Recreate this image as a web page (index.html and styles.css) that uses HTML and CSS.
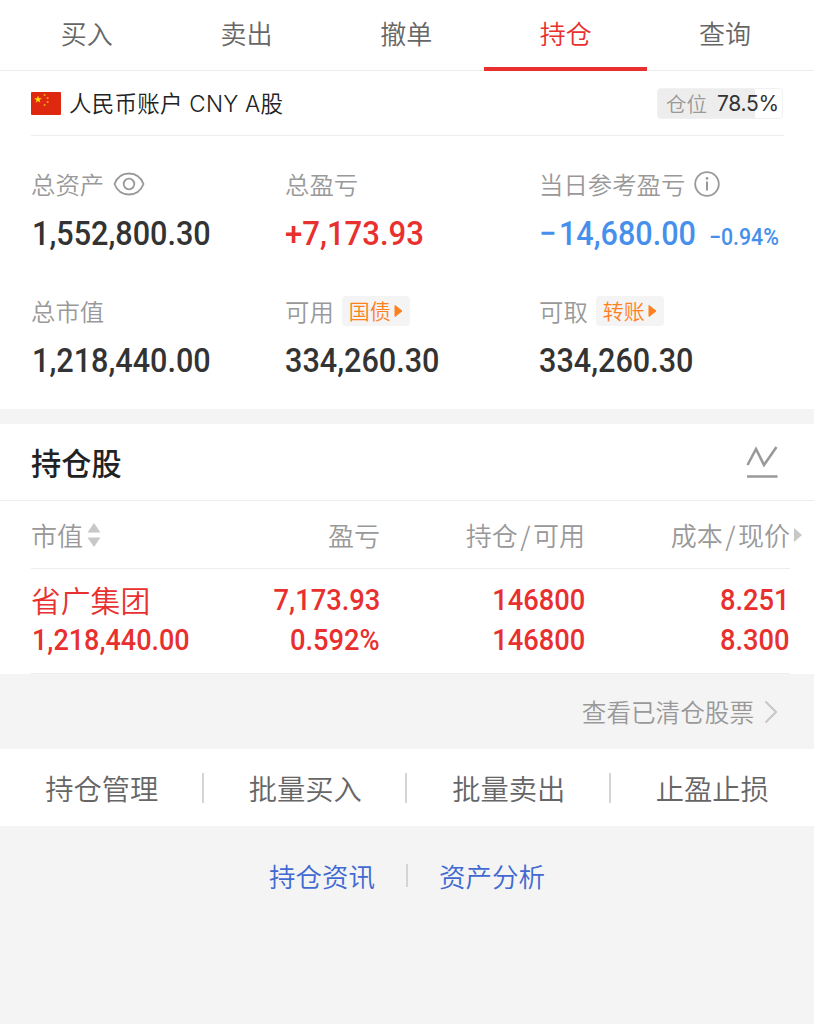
FILE: index.html
```html
<!DOCTYPE html>
<html lang="zh-CN">
<head>
<meta charset="utf-8">
<title>持仓</title>
<link rel="stylesheet" href="styles.css">
</head>
<body>
<nav class="tabs">
  <span class="tab">买入</span><span class="tab">卖出</span><span class="tab">撤单</span><span class="tab tab-active">持仓</span><span class="tab">查询</span>
</nav>
<section class="account">
  <svg class="flag" viewBox="0 0 30 23"><rect width="30" height="23" rx="1" fill="#de2910"/><path fill="#ffde00" d="M7 3.4l.95 2.8h2.95L8.5 7.95l.9 2.85L7 9.05 4.6 10.8l.9-2.85L3.1 6.2h2.95z"/><g fill="#f5b400"><circle cx="13.6" cy="3.1" r="1"/><circle cx="16.6" cy="5.9" r="1"/><circle cx="16.6" cy="10" r="1"/><circle cx="13.6" cy="13" r="1"/></g></svg>
  <span class="account-name">人民币账户 CNY A股</span>
  <span class="position"><span class="position-label">仓位</span><span class="position-value">78.5%</span></span>
</section>
<section class="metrics">
  <div class="metric">
    <div class="label">总资产<svg class="eye" viewBox="0 0 32 24"><g fill="none" stroke="#999" stroke-width="1.8"><path d="M1.500 12C4 5.500 9.500 1.500 16 1.500S28 5.500 30.500 12C28 18.500 22.500 22.500 16 22.500S4 18.500 1.500 12z"/><circle cx="16" cy="12" r="5.300"/></g></svg></div>
    <div class="value value-one"><span class="num">1,552,800.30</span></div>
  </div>
  <div class="metric">
    <div class="label">总盈亏</div>
    <div class="value up"><span class="num num-gain">+7,173.93</span></div>
  </div>
  <div class="metric">
    <div class="label">当日参考盈亏<svg class="info" viewBox="0 0 26 26"><circle cx="13" cy="13" r="11.800" fill="none" stroke="#999" stroke-width="1.800"/><path d="M13 10.500v9" stroke="#999" stroke-width="2"/><circle cx="13" cy="7.400" r="1.300" fill="#999"/></svg></div>
    <div class="value down"><span class="num num-loss"><span class="minus">−</span>14,680.00</span><span class="num rate">−0.94%</span></div>
  </div>
  <div class="metric">
    <div class="label">总市值</div>
    <div class="value value-one"><span class="num">1,218,440.00</span></div>
  </div>
  <div class="metric">
    <div class="label">可用<span class="tag">国债<svg class="play" viewBox="0 0 9 14"><path d="M1 1.500L8 7l-7 5.500z" fill="#ff801f" stroke="#ff801f" stroke-linejoin="round"/></svg></span></div>
    <div class="value"><span class="num">334,260.30</span></div>
  </div>
  <div class="metric">
    <div class="label">可取<span class="tag">转账<svg class="play" viewBox="0 0 9 14"><path d="M1 1.500L8 7l-7 5.500z" fill="#ff801f" stroke="#ff801f" stroke-linejoin="round"/></svg></span></div>
    <div class="value"><span class="num">334,260.30</span></div>
  </div>
</section>
<section class="holdings">
  <header class="holdings-title"><h2>持仓股</h2>
    <svg class="chart" viewBox="0 0 32 34"><path d="M1.500 20L10 4l8 16L30.500 2M1 31.500h30.500" fill="none" stroke="#999" stroke-width="2.600"/></svg>
  </header>
  <div class="columns head">
    <span class="first">市值<svg class="sort" viewBox="0 0 14 24"><path d="M7 0l6.500 9.500H.5zM7 24l6.500-9.500H.5z" fill="#c8c8c8"/></svg></span>
    <span>盈亏</span>
    <span>持仓<i class="slash">/</i>可用</span>
    <span class="last">成本<i class="slash">/</i>现价<svg class="more" viewBox="0 0 8 14"><path d="M0 0l8 7-8 7z" fill="#c8c8c8"/></svg></span>
  </div>
  <div class="columns stock">
    <span class="first stock-name">省广集团</span><span><b class="num">7,173.93</b></span><span><b class="num">146800</b></span><span><b class="num">8.251</b></span>
    <span class="first stock-value"><b class="num">1,218,440.00</b></span><span><b class="num">0.592%</b></span><span><b class="num">146800</b></span><span><b class="num">8.300</b></span>
  </div>
</section>
<div class="cleared"><span class="cleared-text">查看已清仓股票</span><svg class="chevron" viewBox="0 0 14 24"><path d="M1.500 1.500L12 12 1.500 22.500" fill="none" stroke="#c8c8c8" stroke-width="2.200"/></svg></div>
<nav class="actions"><span>持仓管理</span><span>批量买入</span><span>批量卖出</span><span>止盈止损</span></nav>
<footer class="links"><a>持仓资讯</a><i class="divider"></i><a>资产分析</a></footer>
</body>
</html>
```

FILE: styles.css
```css
* { box-sizing: border-box; }
body {
  margin: 0;
  min-height: 1024px;
  background: #f4f4f4;
  color: #333;
  font-family: "Noto Sans CJK SC DemiLight", "Noto Sans CJK SC", sans-serif;
  font-weight: 350;
}
svg { display: block; flex: none; }
.tabs {
  display: flex;
  height: 71px;
  padding: 0 9px 0 7px;
  background: #fff;
  border-bottom: 1px solid #ececec;
}
.tab {
  flex: 1;
  display: flex;
  justify-content: center;
  height: 71px;
  line-height: 66px;
  font-size: 26px;
  color: #666;
}
.tab-active {
  color: #e8302f;
  margin: 0 -2px;
  flex: 0 0 163px;
  border-bottom: 4px solid #e8302f;
}
.account {
  display: flex;
  align-items: center;
  height: 65px;
  padding: 0 31px;
  background: linear-gradient(#eee, #eee) 31px 100% / 753px 1px no-repeat #fff;
}
.flag { width: 30px; height: 23px; }
.account-name {
  margin-left: 8px;
  padding-bottom: 3px;
  font-family: Inter, "Noto Sans CJK SC DemiLight", "Noto Sans CJK SC", sans-serif;
  font-size: 22.5px;
  letter-spacing: .25px;
  color: #222;
  white-space: nowrap;
}
.position {
  display: flex;
  align-items: center;
  width: 126px;
  height: 31px;
  margin-left: auto;
  padding-left: 8px;
  border: 1px solid #f1f1f1;
  border-radius: 4px;
  background: linear-gradient(90deg, #ededed 78.5%, #fff 78.5%);
}
.position-label { padding-bottom: 2px; font-size: 20.5px; color: #999; }
.position-value {
  margin-left: 10px;
  font-family: Inter, sans-serif;
  font-size: 21px;
  font-weight: 400;
  letter-spacing: -.3px;
}
.metrics {
  display: grid;
  grid-template-columns: 254px 254px 1fr;
  row-gap: 42px;
  height: 273px;
  padding: 31px 0 0 31px;
  background: #fff;
  align-content: start;
}
.label {
  display: flex;
  align-items: center;
  height: 33px;
  font-size: 24.4px;
  line-height: 32px;
  color: #999;
}
.eye { width: 32px; height: 24px; margin-left: 9px; }
.info { width: 26px; height: 26px; margin-left: 9px; }
.tag {
  display: flex;
  align-items: center;
  width: 68px;
  height: 30px;
  margin-left: 8px;
  padding: 0 0 2px 7px;
  border-radius: 4px;
  background: #f4f4f4;
  color: #ff801f;
  font-size: 21px;
}
.play { width: 9px; height: 14px; margin: 2px 0 0 3px; }
.value {
  display: flex;
  height: 40px;
  margin-top: 12.5px;
  line-height: 40px;
  font-size: 34px;
  white-space: nowrap;
}
.value-one { padding-left: 1px; }
.num {
  display: inline-block;
  font-family: Roboto, sans-serif;
  font-weight: 500;
  transform: scaleX(.9);
  transform-origin: left center;
}
.num-gain { transform: scaleX(.915); }
.up { color: #e8302f; }
.down { color: #4690ec; }
.num-loss { width: 170px; }
.minus { margin-right: 3px; }
.rate { font-size: 23px; line-height: 49px; transform: scaleX(.925); }
.holdings { margin-top: 15px; background: #fff; }
.holdings-title {
  display: flex;
  align-items: center;
  justify-content: space-between;
  height: 77px;
  padding: 0 36px 0 31px;
  border-bottom: 1px solid #ececec;
}
.holdings-title h2 {
  margin: 0;
  font-family: "Noto Sans CJK SC", sans-serif;
  font-size: 30.2px;
  font-weight: 500;
  color: #222;
}
.chart { width: 32px; height: 34px; }
.columns {
  display: grid;
  grid-template-columns: 150px 199px 205px 205px;
  margin-left: 31px;
  width: 759px;
  text-align: right;
}
.columns .first { text-align: left; }
.head {
  height: 68px;
  border-bottom: 1px solid #eee;
  line-height: 67px;
  font-size: 26px;
  color: #999;
}
.head .first { display: flex; align-items: center; }
.sort { width: 14px; height: 24px; margin-left: 4px; }
.slash { margin: 0 2.5px; font-style: normal; }
.last { display: flex; align-items: center; justify-content: flex-end; margin-right: -12px; }
.more { width: 8px; height: 14px; margin-left: 4px; }
.stock {
  height: 105px;
  padding-top: 11px;
  grid-auto-rows: 40px;
  line-height: 40px;
  font-size: 30px;
  color: #e8302f;
  border-bottom: 1px solid #eee;
}
.stock span { display: flex; justify-content: flex-end; }
.stock .first { justify-content: flex-start; }
.stock .num { transform: scaleX(.91); transform-origin: right center; }
.stock .first .num { transform: scaleX(.9); transform-origin: left center; }
.stock .stock-name { font-size: 29.8px; line-height: 39px; }
.stock .stock-value { padding-left: 1px; }
.cleared {
  display: flex;
  align-items: center;
  justify-content: flex-end;
  height: 75px;
  padding-right: 36px;
  line-height: 36px;
  font-size: 24.6px;
  color: #999;
}
.cleared-text { padding-bottom: 2px; }
.chevron { width: 14px; height: 24px; margin-left: 10px; }
.actions {
  display: grid;
  grid-template-columns: repeat(4, 1fr);
  height: 77px;
  background: #fff;
  line-height: 77px;
  font-size: 28.3px;
  color: #666;
  text-align: center;
}
.actions span:not(:last-child) { background: linear-gradient(#d4d4d4, #d4d4d4) 100% 50% / 2px 30px no-repeat; }
.links {
  display: flex;
  align-items: center;
  justify-content: center;
  height: 98px;
  font-size: 26.5px;
  color: #4169d1;
}
.divider { width: 2px; height: 23px; margin: 0 31px; background: #d4d4d4; }
```
